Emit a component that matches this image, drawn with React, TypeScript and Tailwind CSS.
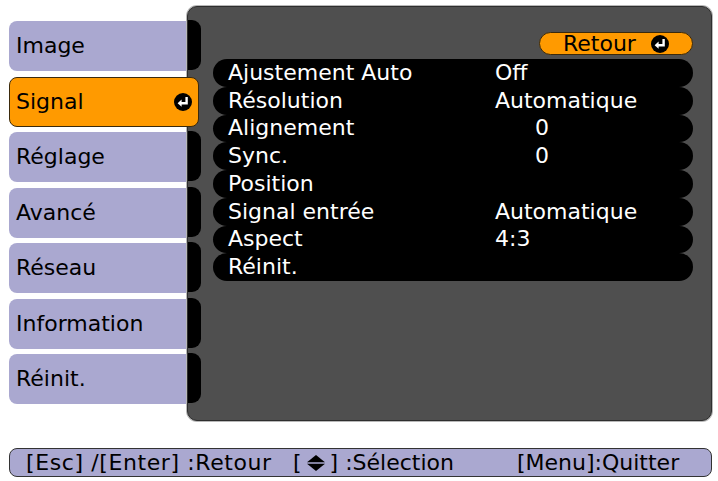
import React from 'react';

const tabs = ['Image', 'Signal', 'Réglage', 'Avancé', 'Réseau', 'Information', 'Réinit.'];

const rows: { label: string; value: string; indent?: boolean }[] = [
  { label: 'Ajustement Auto', value: 'Off' },
  { label: 'Résolution', value: 'Automatique' },
  { label: 'Alignement', value: '0', indent: true },
  { label: 'Sync.', value: '0', indent: true },
  { label: 'Position', value: '' },
  { label: 'Signal entrée', value: 'Automatique' },
  { label: 'Aspect', value: '4:3' },
  { label: 'Réinit.', value: '' },
];

// black disc with the white "enter" arrow
const EnterIcon: React.FC = () => (
  <svg width="18" height="18" viewBox="0 0 18 18" className="shrink-0">
    <circle cx="9" cy="9" r="9" fill="#000" />
    <path d="M12.6 4 V10.2 H7" stroke="#fff" strokeWidth="2.4" fill="none" />
    <path d="M3.6 10.2 L7.6 6.6 L7.6 13.8 Z" fill="#fff" />
  </svg>
);

const UpDown: React.FC = () => (
  <svg width="20" height="18" viewBox="0 0 20 18" className="mx-[4px]">
    <path d="M10 1 L19 8.2 L1 8.2 Z" fill="#000" />
    <path d="M1 9.8 L19 9.8 L10 17 Z" fill="#000" />
  </svg>
);

export default function App() {
  return (
    <div className="flex h-[481px] w-[718px] flex-col overflow-hidden bg-white font-['DejaVu_Sans',sans-serif] text-[22px] leading-none">
      <div className="flex items-start">
        {/* menu tabs */}
        <div className="ml-[9px] mt-[21px] flex w-[178px] flex-col gap-[5.5px]">
          {tabs.map((t) =>
            t === 'Signal' ? (
              <div
                key={t}
                className="relative z-10 flex h-[50px] w-[190px] items-center justify-between rounded-[8px] border border-[#3b2a0c] bg-[#ff9a00] pl-[6px] pr-[6px] text-black"
              >
                <span>{t}</span>
                <EnterIcon />
              </div>
            ) : (
              <div key={t} className="flex h-[50px] w-[178px] items-center rounded-l-[8px] bg-[#aaa8d0] pl-[7px] text-black">
                {t}
              </div>
            )
          )}
        </div>

        {/* sub menu panel */}
        <div className="mt-[6px] flex h-[415px] w-[525px] rounded-[10px] border border-[#2e2e2e] bg-[#4f4f4f] shadow-[0_0_0_1px_#b8b8b8]">
          <div className="mt-[13px] flex w-[13px] flex-col gap-[5.5px]">
            {tabs.map((t) => (
              <div key={t} className={t === 'Signal' ? 'h-[50px]' : 'h-[50px] rounded-r-[9px] bg-black'} />
            ))}
          </div>
          <div className="flex flex-1 flex-col pl-[12px] pr-[18px] pt-[25px]">
            <div className="flex justify-end">
              <div className="flex h-[23px] w-[154px] items-center rounded-full border border-[#3b2a0c] bg-[#ff9a00] pl-[23px] text-black">
                <span>Retour</span>
                <span className="ml-[15px]">
                  <EnterIcon />
                </span>
              </div>
            </div>
            <div className="mt-[4px] flex flex-col">
              {rows.map((r) => (
                <div key={r.label} className="flex h-[27.75px] items-center rounded-full bg-black pl-[15px] text-white">
                  <span className="w-[267px]">{r.label}</span>
                  <span className={r.indent ? 'pl-[40px]' : ''}>{r.value}</span>
                </div>
              ))}
            </div>
          </div>
        </div>
      </div>

      {/* key help bar */}
      <div className="ml-[9px] mt-[27px] flex h-[29px] w-[703px] items-center rounded-[8px] border border-[#333] bg-[#aaa8d0] pl-[16px] text-black">
        <span className="w-[267px] tracking-[0.6px]">[Esc] /[Enter] :Retour</span>
        <span className="flex w-[224px] items-center">
          [<UpDown />] :Sélection
        </span>
        <span>[Menu]:Quitter</span>
      </div>
    </div>
  );
}
